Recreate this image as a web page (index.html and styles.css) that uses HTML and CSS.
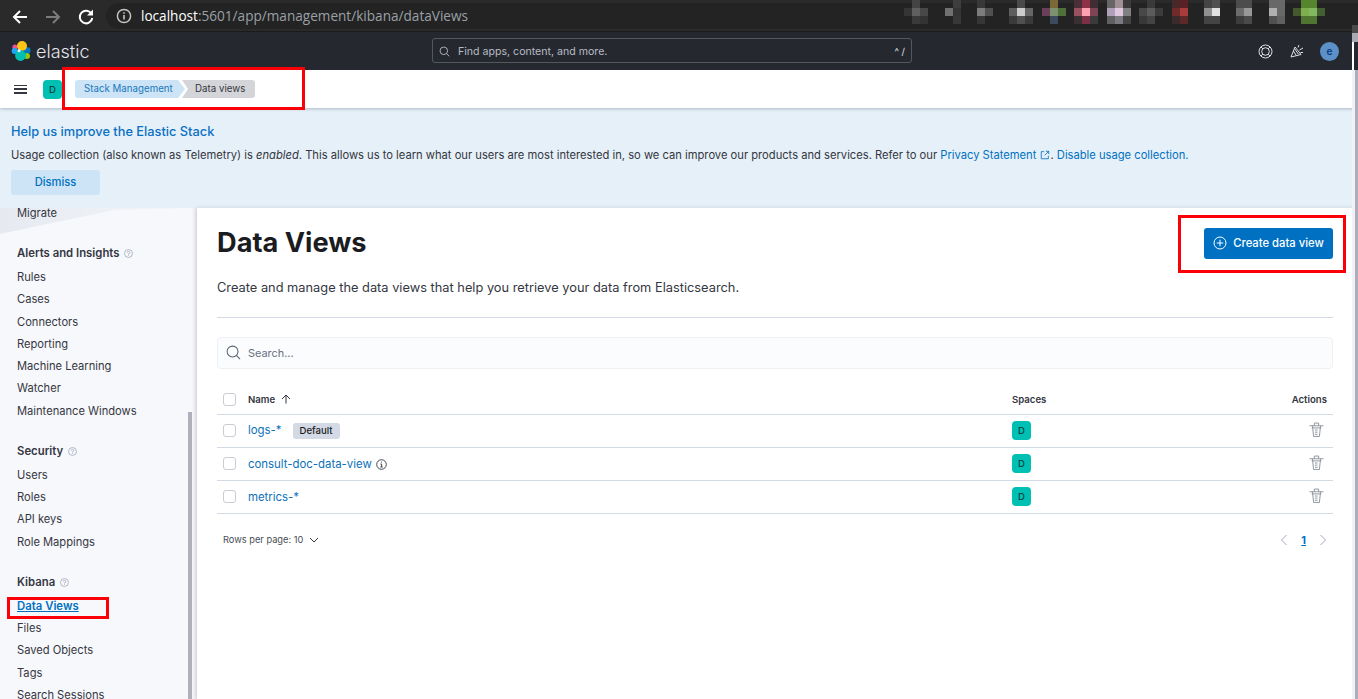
FILE: index.html
```html
<!DOCTYPE html>
<html lang="en">
<head>
    <meta charset="UTF-8">
    <meta name="viewport" content="width=device-width, initial-scale=1.0">
    <title>Data Views - Elastic</title>
    <link rel="stylesheet" href="styles.css">
</head>
<body>
    <div class="browser-bar">
        <svg class="browser-icon" width="18" height="18" viewBox="0 0 18 18"><path d="M16 9H3M9 3 3 9l6 6" fill="none" stroke="#fff" stroke-width="2"/></svg>
        <svg class="browser-icon" width="18" height="18" viewBox="0 0 18 18"><path d="M2 9h13M9 3l6 6-6 6" fill="none" stroke="#7c7c7c" stroke-width="2"/></svg>
        <svg class="browser-icon" width="18" height="18" viewBox="0 0 18 18"><path d="M14.600 6A6.300 6.300 0 1 0 15.300 10" fill="none" stroke="#fff" stroke-width="2"/><path d="M16 1.500V7.500H10Z" fill="#fff"/></svg>
        <div class="address">
            <svg width="16" height="16" viewBox="0 0 16 16"><circle cx="8" cy="8" r="6.600" fill="none" stroke="#c4c4c4" stroke-width="1.500"/><path d="M8 7v4.500M8 4.200v1.600" stroke="#c4c4c4" stroke-width="1.600"/></svg>
            <span class="address-text"><b>localhost</b>:5601/app/management/kibana/dataViews</span>
        </div>
        <svg class="mosaic" width="448" height="25" viewBox="0 0 448 25">
            <g fill="#353535"><rect x="0" y="8" width="8" height="8"/><rect x="49" y="8" width="8" height="8"/></g>
            <rect x="8" y="0" width="8" height="8" fill="#444"/><rect x="8" y="8" width="8" height="8" fill="#606060"/><rect x="8" y="16" width="8" height="8" fill="#3a3a3a"/>
            <rect x="16" y="8" width="8" height="8" fill="#484848"/><rect x="16" y="16" width="8" height="8" fill="#333"/>
            <rect x="41" y="8" width="8" height="8" fill="#707070"/>
            <rect x="49" y="0" width="8" height="8" fill="#3e3e3e"/><rect x="49" y="16" width="8" height="8" fill="#383838"/>
            <rect x="73" y="0" width="8" height="8" fill="#383838"/><rect x="73" y="8" width="8" height="8" fill="#7c7c7c"/><rect x="73" y="16" width="8" height="8" fill="#363636"/>
            <rect x="81" y="8" width="8" height="8" fill="#505050"/>
            <rect x="105" y="8" width="8" height="8" fill="#5e5e5e"/><rect x="105" y="16" width="8" height="8" fill="#3a3a3a"/>
            <rect x="113" y="0" width="8" height="8" fill="#4a4a4a"/><rect x="113" y="8" width="8" height="8" fill="#ccc"/><rect x="113" y="16" width="8" height="8" fill="#505050"/>
            <rect x="121" y="8" width="8" height="8" fill="#666"/><rect x="121" y="16" width="8" height="8" fill="#3a3a3a"/>
            <rect x="138" y="8" width="8" height="8" fill="#6a3f5a"/>
            <rect x="146" y="0" width="8" height="8" fill="#7a6838"/><rect x="146" y="8" width="8" height="8" fill="#7d9070"/><rect x="146" y="16" width="8" height="8" fill="#3c4a5e"/>
            <rect x="154" y="8" width="8" height="8" fill="#4f7038"/>
            <rect x="170" y="0" width="8" height="8" fill="#4a2e38"/><rect x="170" y="8" width="8" height="8" fill="#99505f"/><rect x="170" y="16" width="8" height="8" fill="#3a3033"/>
            <rect x="178" y="0" width="8" height="8" fill="#8d3048"/><rect x="178" y="8" width="8" height="8" fill="#ffa0b0"/><rect x="178" y="16" width="8" height="8" fill="#7d3045"/>
            <rect x="186" y="0" width="8" height="8" fill="#402c33"/><rect x="186" y="8" width="8" height="8" fill="#7c4455"/><rect x="186" y="16" width="8" height="8" fill="#3a3a3a"/>
            <rect x="203" y="0" width="8" height="8" fill="#666"/><rect x="203" y="8" width="8" height="8" fill="#b0a0b8"/><rect x="203" y="16" width="8" height="8" fill="#606060"/>
            <rect x="211" y="0" width="8" height="8" fill="#a09098"/><rect x="211" y="8" width="8" height="8" fill="#e0c8e0"/><rect x="211" y="16" width="8" height="8" fill="#7a7a80"/>
            <rect x="219" y="0" width="8" height="8" fill="#3a3a3a"/><rect x="219" y="8" width="8" height="8" fill="#808080"/><rect x="219" y="16" width="8" height="8" fill="#444"/>
            <rect x="235" y="8" width="8" height="8" fill="#484848"/><rect x="235" y="16" width="8" height="8" fill="#383838"/>
            <rect x="243" y="0" width="8" height="8" fill="#3a3a3a"/><rect x="243" y="8" width="8" height="8" fill="#5c5c5c"/><rect x="243" y="16" width="8" height="8" fill="#444"/>
            <rect x="251" y="8" width="8" height="8" fill="#3c3c3c"/>
            <rect x="268" y="0" width="8" height="8" fill="#482828"/><rect x="268" y="8" width="8" height="8" fill="#702a2a"/><rect x="268" y="16" width="8" height="8" fill="#3a2a2a"/>
            <rect x="276" y="0" width="8" height="8" fill="#5a2025"/><rect x="276" y="8" width="8" height="8" fill="#a83c3c"/><rect x="276" y="16" width="8" height="8" fill="#5c2828"/>
            <rect x="300" y="0" width="8" height="8" fill="#444"/><rect x="300" y="8" width="8" height="8" fill="#909090"/><rect x="300" y="16" width="8" height="8" fill="#444"/>
            <rect x="308" y="0" width="8" height="8" fill="#505050"/><rect x="308" y="8" width="8" height="8" fill="#e0e0e0"/><rect x="308" y="16" width="8" height="8" fill="#444"/>
            <rect x="332" y="0" width="8" height="8" fill="#4c4c4c"/><rect x="332" y="8" width="8" height="8" fill="#6c6c6c"/><rect x="332" y="16" width="8" height="8" fill="#3c3c3c"/>
            <rect x="340" y="0" width="8" height="8" fill="#4c4c4c"/><rect x="340" y="8" width="8" height="8" fill="#989898"/><rect x="340" y="16" width="8" height="8" fill="#4a4a4a"/>
            <rect x="365" y="0" width="8" height="8" fill="#686868"/><rect x="365" y="8" width="8" height="8" fill="#b0b0b0"/><rect x="365" y="16" width="8" height="8" fill="#505050"/>
            <rect x="373" y="0" width="8" height="16" fill="#686868"/><rect x="373" y="16" width="8" height="8" fill="#606060"/>
            <rect x="389" y="8" width="8" height="8" fill="#445a2e"/>
            <rect x="397" y="0" width="16" height="8" fill="#55852f"/><rect x="397" y="8" width="8" height="8" fill="#7eb050"/><rect x="405" y="8" width="8" height="8" fill="#84b860"/><rect x="397" y="16" width="16" height="8" fill="#4f7530"/>
            <rect x="413" y="8" width="8" height="8" fill="#446030"/>
        </svg>
    </div>

    <header class="top-header">
        <div class="logo">
            <svg width="20" height="20" viewBox="0 0 20 20">
                <circle cx="4" cy="6" r="2.600" fill="#f04e98"/>
                <circle cx="3.600" cy="10" r="3" fill="#1ba9f5"/>
                <circle cx="16.300" cy="9.400" r="3.200" fill="#0077cc"/>
                <circle cx="16" cy="15" r="3" fill="#93c90e"/>
                <circle cx="11" cy="5" r="5" fill="#fec514"/>
                <circle cx="9.500" cy="14.500" r="5.400" fill="#00bfb3"/>
                <circle cx="8" cy="9.700" r="1.600" fill="#e8f4f8"/>
            </svg>
            <span>elastic</span>
        </div>
        <div class="global-search">
            <svg width="11" height="11" viewBox="0 0 16 16"><circle cx="7" cy="7" r="5.500" fill="none" stroke="#b8bcc4" stroke-width="1.300"/><path d="m11 11 4 4" stroke="#b8bcc4" stroke-width="1.300"/></svg>
            <span class="global-search-text">Find apps, content, and more.</span>
            <span class="global-search-key">^ /</span>
        </div>
        <div class="header-icons">
            <svg class="help-ring" width="15" height="15" viewBox="0 0 15 15" fill="none" stroke="#dfe1e6" stroke-width="1"><circle cx="7.500" cy="7.500" r="6.500"/><circle cx="7.500" cy="7.500" r="3.800"/><path d="m2.900 2.900 2 2M12.100 2.900l-2 2M2.900 12.100l2-2M12.100 12.100l-2-2"/></svg>
            <svg class="cheer" width="14" height="14" viewBox="0 0 14 14" fill="none" stroke="#dfe1e6" stroke-width="1"><path d="M1 13 5 3l6 7.500ZM3.400 7l3 4.600M4.600 4.800l4 5.600M8 3.500 9 1M9.500 6 13 4M10.500 8.500h2.500"/></svg>
            <span class="avatar">e</span>
        </div>
    </header>

    <nav class="nav-bar">
        <button class="menu-btn" aria-label="Menu"><span></span><span></span><span></span></button>
        <span class="space-badge">D</span>
        <div class="breadcrumbs">
            <a class="crumb crumb-first">Stack Management</a>
            <span class="crumb crumb-last">Data views</span>
        </div>
    </nav>

    <section class="banner">
        <h3>Help us improve the Elastic Stack</h3>
        <p>Usage collection (also known as Telemetry) is <em>enabled</em>. This allows us to learn what our users are most interested in, so we can improve our products and services. Refer to our <a>Privacy Statement <svg width="10" height="10" viewBox="0 0 12 12" fill="none" stroke="#0071c2"><path d="M5 2H1.500v8.500H10V7M7 1.500h3.500V5M10.500 1.500 5.500 6.500"/></svg></a>. <a>Disable usage collection.</a></p>
        <button class="dismiss">Dismiss</button>
    </section>

    <div class="content">
        <aside class="sidebar">
            <div class="sidebar-wedge"></div>
            <ul class="side-group side-group-first">
                <li>Migrate</li>
            </ul>
            <div class="side-title">Alerts and Insights <svg class="help" width="9" height="9" viewBox="0 0 10 10"><circle cx="5" cy="5" r="4.400" fill="none" stroke="#98a2b3" stroke-width=".8"/><path d="M3.600 4A1.400 1.400 0 1 1 5 5.400V6.200M5 7v.8" fill="none" stroke="#98a2b3" stroke-width=".8"/></svg></div>
            <ul class="side-group">
                <li>Rules</li>
                <li>Cases</li>
                <li>Connectors</li>
                <li>Reporting</li>
                <li>Machine Learning</li>
                <li>Watcher</li>
                <li>Maintenance Windows</li>
            </ul>
            <div class="side-title">Security <svg class="help" width="9" height="9" viewBox="0 0 10 10"><circle cx="5" cy="5" r="4.400" fill="none" stroke="#98a2b3" stroke-width=".8"/><path d="M3.600 4A1.400 1.400 0 1 1 5 5.400V6.200M5 7v.8" fill="none" stroke="#98a2b3" stroke-width=".8"/></svg></div>
            <ul class="side-group">
                <li>Users</li>
                <li>Roles</li>
                <li>API keys</li>
                <li>Role Mappings</li>
            </ul>
            <div class="side-title">Kibana <svg class="help" width="9" height="9" viewBox="0 0 10 10"><circle cx="5" cy="5" r="4.400" fill="none" stroke="#98a2b3" stroke-width=".8"/><path d="M3.600 4A1.400 1.400 0 1 1 5 5.400V6.200M5 7v.8" fill="none" stroke="#98a2b3" stroke-width=".8"/></svg></div>
            <ul class="side-group">
                <li class="active">Data Views</li>
                <li>Files</li>
                <li>Saved Objects</li>
                <li>Tags</li>
                <li>Search Sessions</li>
            </ul>
            <div class="side-thumb"></div>
        </aside>

        <main class="main">
            <div class="page-head">
                <h1>Data Views</h1>
                <button class="create-btn">
                    <svg width="14" height="14" viewBox="0 0 14 14" fill="none" stroke="#fff"><circle cx="7" cy="7" r="6"/><path d="M7 3.800v6.400M3.800 7h6.400"/></svg>
                    Create data view
                </button>
            </div>
            <p class="page-desc">Create and manage the data views that help you retrieve your data from Elasticsearch.</p>
            <hr class="divider">
            <div class="search-box">
                <svg width="15" height="15" viewBox="0 0 16 16"><circle cx="7" cy="7" r="5.800" fill="none" stroke="#5a6270" stroke-width="1.100"/><path d="m11 11 4 4" stroke="#5a6270" stroke-width="1.100"/></svg>
                <span>Search...</span>
            </div>

            <table class="views-table">
                <thead>
                    <tr>
                        <th class="col-check"><span class="checkbox"></span></th>
                        <th class="col-name">Name <svg class="sort-icon" width="10" height="10" viewBox="0 0 10 10"><path d="M5 9.500V1M1 5l4-4 4 4" fill="none" stroke="#343741"/></svg></th>
                        <th class="col-spaces">Spaces</th>
                        <th class="col-actions">Actions</th>
                    </tr>
                </thead>
                <tbody>
                    <tr>
                        <td class="col-check"><span class="checkbox"></span></td>
                        <td class="col-name"><a>logs-*</a><span class="default-tag">Default</span></td>
                        <td class="col-spaces"><span class="space-badge">D</span></td>
                        <td class="col-actions"><svg width="15" height="15" viewBox="0 0 14 14" fill="none" stroke="#8f949c" stroke-width=".9"><path d="M.5 3.500h13M5 3.500V1h4v2.500M2.500 5.500h9M3.200 3.500 4.300 13.500h5.400l1.100-10M5.500 7.500H8M5.500 9.500H8M5.500 11.500H8"/></svg></td>
                    </tr>
                    <tr>
                        <td class="col-check"><span class="checkbox"></span></td>
                        <td class="col-name"><a>consult-doc-data-view</a><svg class="info-icon" width="11" height="11" viewBox="0 0 11 11" fill="none" stroke="#343741" stroke-width=".9"><circle cx="5.500" cy="5.500" r="4.800"/><path d="M4.300 5h1.300v3M4.300 8h2.500M5.500 2.600v1"/></svg></td>
                        <td class="col-spaces"><span class="space-badge">D</span></td>
                        <td class="col-actions"><svg width="15" height="15" viewBox="0 0 14 14" fill="none" stroke="#8f949c" stroke-width=".9"><path d="M.5 3.500h13M5 3.500V1h4v2.500M2.500 5.500h9M3.200 3.500 4.300 13.500h5.400l1.100-10M5.500 7.500H8M5.500 9.500H8M5.500 11.500H8"/></svg></td>
                    </tr>
                    <tr>
                        <td class="col-check"><span class="checkbox"></span></td>
                        <td class="col-name"><a>metrics-*</a></td>
                        <td class="col-spaces"><span class="space-badge">D</span></td>
                        <td class="col-actions"><svg width="15" height="15" viewBox="0 0 14 14" fill="none" stroke="#8f949c" stroke-width=".9"><path d="M.5 3.500h13M5 3.500V1h4v2.500M2.500 5.500h9M3.200 3.500 4.300 13.500h5.400l1.100-10M5.500 7.500H8M5.500 9.500H8M5.500 11.500H8"/></svg></td>
                    </tr>
                </tbody>
            </table>

            <div class="table-foot">
                <span class="rows-per-page">Rows per page: 10 <svg width="10" height="10" viewBox="0 0 10 10"><path d="M1 3l4 4 4-4" fill="none" stroke="#343741"/></svg></span>
                <div class="pager">
                    <svg width="8" height="12" viewBox="0 0 8 12"><path d="M6.500 1 1.500 6l5 5" fill="none" stroke="#a2abba"/></svg>
                    <span class="pager-num">1</span>
                    <svg width="8" height="12" viewBox="0 0 8 12"><path d="M1.500 1l5 5-5 5" fill="none" stroke="#a2abba"/></svg>
                </div>
            </div>
        </main>
    </div>

    <div class="page-scrollbar">
        <div class="scroll-arrow"></div>
        <div class="scroll-cap"></div>
        <div class="scroll-gap"></div>
        <div class="scroll-thumb"></div>
    </div>

    <div class="red-box red-crumbs"></div>
    <div class="red-box red-create"></div>
    <div class="red-box red-side"></div>
</body>
</html>
```

FILE: styles.css
```css
* {
    box-sizing: border-box;
}
html, body {
    height: 699px;
    overflow: hidden;
}
body {
    margin: 0;
    font-family: Inter, "Noto Sans", sans-serif;
    font-size: 11.150px;
    color: #343741;
    background: #fff;
    display: flex;
    flex-direction: column;
    position: relative;
}
ul {
    list-style: none;
    margin: 0;
    padding: 0;
}
a {
    color: #0071c2;
}

/* browser chrome */
.browser-bar {
    height: 32px;
    flex: none;
    display: flex;
    align-items: flex-start;
    padding: 4px 0 0 11px;
    gap: 15px;
    background: #2a2a2a;
    border-bottom: 1px solid #1b1b1b;
    position: relative;
}
.browser-icon {
    margin-top: 4px;
}
.address {
    flex: 1;
    height: 26px;
    margin-left: -4px;
    margin-top: -1px;
    padding-left: 10px;
    display: flex;
    align-items: center;
    gap: 9px;
    background: #232323;
    border-radius: 13px 0 0 13px;
}
.address-text {
    font-family: "Open Sans", sans-serif;
    font-size: 13.600px;
    color: #9aa0a6;
    position: relative;
    top: -1px;
}
.address-text b {
    color: #fff;
    font-weight: 400;
}
.mosaic {
    position: absolute;
    left: 904px;
    top: 0;
}

/* elastic header */
.top-header {
    height: 38px;
    flex: none;
    background: #25282f;
    display: flex;
    align-items: center;
    padding: 0 19px 0 11px;
    position: relative;
}
.logo {
    display: flex;
    align-items: center;
    gap: 5px;
    color: #e4e6ea;
    font-size: 18px;
    font-weight: 300;
}
.global-search {
    position: absolute;
    left: 432px;
    top: 6px;
    width: 480px;
    height: 25px;
    border: 1px solid #53575f;
    border-radius: 3px;
    display: flex;
    align-items: center;
    padding: 1px 6px 0 6px;
    gap: 8px;
    font-size: 10.600px;
    color: #b8bcc4;
}
.global-search-text {
    flex: 1;
}
.global-search-key {
    font-size: 9.500px;
    color: #dfe1e6;
}
.header-icons {
    margin-left: auto;
    display: flex;
    align-items: center;
}
.help-ring {
    margin-right: 18px;
    position: relative;
    left: 1px;
}
.cheer {
    margin-right: 16px;
}
.avatar {
    width: 19px;
    height: 19px;
    border-radius: 50%;
    background: #5b90c8;
    color: #0b3a78;
    font-size: 10px;
    font-weight: 600;
    display: flex;
    align-items: center;
    justify-content: center;
}

/* nav bar */
.nav-bar {
    height: 38px;
    flex: none;
    background: #fff;
    display: flex;
    align-items: center;
    padding-left: 14px;
    box-shadow: 0 1px 3px rgba(60, 80, 110, .35);
    position: relative;
    z-index: 2;
}
.menu-btn {
    width: 13px;
    height: 9px;
    padding: 0;
    border: 0;
    background: none;
    display: flex;
    flex-direction: column;
    justify-content: space-between;
    margin-right: 16px;
}
.menu-btn span {
    height: 1.500px;
    background: #343741;
}
.space-badge {
    width: 19px;
    height: 19px;
    border-radius: 4px;
    background: #00bfb3;
    color: #062b2a;
    font-size: 9.500px;
    display: inline-flex;
    align-items: center;
    justify-content: center;
}
.breadcrumbs {
    display: flex;
    margin-left: 13px;
    font-size: 9.700px;
    letter-spacing: .02px;
}
.crumb {
    height: 18px;
    display: flex;
    align-items: center;
    padding-bottom: 1px;
}
.crumb-first {
    background: #cce4f5;
    color: #1a78bd;
    padding-left: 9px;
    border-radius: 3px 0 0 3px;
    clip-path: polygon(0 0, calc(100% - 7px) 0, 100% 50%, calc(100% - 7px) 100%, 0 100%);
    width: 110px;
}
.crumb-last {
    background: #d4d5d8;
    color: #343741;
    margin-left: -3px;
    width: 73px;
    padding-left: 13px;
    border-radius: 0 3px 3px 0;
    clip-path: polygon(0 0, 100% 0, 100% 100%, 0 100%, 6px 50%);
}

/* telemetry banner */
.banner {
    height: 100px;
    flex: none;
    background: #e6f0f8;
    padding: 15px 11px 0;
}
.banner h3 {
    margin: 0;
    color: #0b71c4;
    font-size: 12.800px;
    font-weight: 500;
    line-height: 17px;
}
.banner p {
    margin: 7px 0 0;
    line-height: 16px;
    font-size: 11.180px;
}
.banner p svg {
    vertical-align: -1px;
    margin-left: 1px;
}
.dismiss {
    display: block;
    width: 89px;
    height: 25px;
    margin-top: 7px;
    padding: 0 0 2px;
    border: 0;
    border-radius: 3px;
    background: #cce4f5;
    color: #0071c2;
    font: 500 11.150px Inter, sans-serif;
}

/* content */
.content {
    flex: 1;
    display: flex;
    min-height: 0;
}
.sidebar {
    width: 197px;
    flex: none;
    background: #f7f8fc;
    overflow: hidden;
    padding-left: 17px;
    position: relative;
    box-shadow: inset -5px 0 5px -4px rgba(120, 130, 150, .18);
}
.sidebar-wedge {
    position: absolute;
    left: 0;
    top: 0;
    width: 190px;
    height: 26px;
    background: linear-gradient(to right, #e6eaf0, #f3f5f9);
    clip-path: polygon(0 0, 100% 0, 60% 8%, 0 100%);
}
.side-group {
    position: relative;
}
.side-group li {
    height: 22.300px;
    line-height: 22.300px;
    white-space: nowrap;
}
.side-group-first li {
    height: 16.300px;
    line-height: 10.300px;
}
.side-group li.active {
    color: #0071c2;
    font-size: 11.350px;
    font-weight: 600;
    text-decoration: underline;
}
.side-title {
    position: relative;
    margin-top: 17.700px;
    height: 24px;
    line-height: 22px;
    font-size: 11.350px;
    font-weight: 600;
}
.help {
    margin-left: 2px;
    vertical-align: -1px;
}
.side-thumb {
    position: absolute;
    left: 188px;
    top: 204px;
    bottom: 0;
    width: 4px;
    background: #aeb0bb;
}
.main {
    flex: 1;
    min-width: 0;
    background: #fff;
    padding: 20px 25px 0 20px;
    box-shadow: -1px 0 4px rgba(90, 100, 120, .2);
    position: relative;
}
.page-scrollbar {
    position: absolute;
    left: 1352px;
    top: 25px;
    bottom: 0;
    width: 6px;
    display: flex;
    flex-direction: column;
    z-index: 4;
}
.scroll-arrow {
    height: 8px;
    background: #4a4a4a;
}
.scroll-cap {
    height: 9px;
    background: #aaaab5;
}
.scroll-gap {
    height: 28px;
    background: #25282f;
    border-left: 2px solid #fff;
}
.scroll-thumb {
    flex: 1;
    background: #aeaebb;
    border-left: 3px solid #f1f2f5;
}
.page-head {
    display: flex;
    justify-content: space-between;
    align-items: center;
    height: 31px;
}
h1 {
    margin: 0 0 2px;
    color: #1a1c21;
    font-size: 27.200px;
    font-weight: 700;
    line-height: 31px;
}
.create-btn {
    width: 129px;
    height: 31px;
    padding: 0 0 1px;
    border: 0;
    border-radius: 3px;
    background: #0071c2;
    color: #fff;
    font: 500 11.250px Inter, sans-serif;
    display: flex;
    align-items: center;
    justify-content: center;
    gap: 6px;
}
.page-desc {
    margin: 20px 0 0;
    font-size: 12.820px;
    line-height: 18px;
}
.divider {
    margin: 20px 0 0;
    border: 0;
    border-top: 1px solid #d3dae6;
}
.search-box {
    margin-top: 19px;
    height: 32px;
    background: #fbfcfd;
    border: 1px solid #eef0f4;
    border-radius: 4px;
    display: flex;
    align-items: center;
    gap: 7px;
    padding-left: 8px;
    padding-bottom: 1px;
    color: #69707d;
    font-size: 10.900px;
}
.views-table {
    width: 100%;
    margin-top: 13px;
    border-collapse: collapse;
    table-layout: fixed;
}
.views-table th, .views-table td {
    padding: 0;
    border-bottom: 1px solid #d3dae6;
    text-align: left;
    height: 33px;
    vertical-align: middle;
}
.views-table th {
    font-size: 9.600px;
    font-weight: 600;
    height: 32px;
    padding-top: 3px;
}
.col-check {
    width: 31px;
    padding-left: 6px !important;
}
.col-spaces {
    width: 260px;
}
.col-actions {
    width: 61px;
    text-align: right !important;
    padding-right: 6px !important;
}
.col-actions svg {
    margin-right: 3px;
}
.checkbox {
    display: block;
    width: 13px;
    height: 13px;
    background: #fff;
    border: 1px solid #c9ccd3;
    border-radius: 3px;
}
.sort-icon {
    margin-left: 3px;
    vertical-align: -1.500px;
}
.views-table a {
    font-size: 11.400px;
    color: #0b71b8;
}
.default-tag {
    display: inline-block;
    margin-left: 11px;
    padding: 0 7px;
    height: 16px;
    line-height: 16px;
    background: #d3dae6;
    border-radius: 3px;
    color: #1a1c21;
    font-size: 9.600px;
    font-weight: 500;
}
.info-icon {
    margin-left: 4px;
    vertical-align: -2px;
}
.table-foot {
    display: flex;
    justify-content: space-between;
    align-items: center;
    margin-top: 17px;
    height: 18px;
    padding: 0 6px;
}
.rows-per-page {
    font-size: 9.250px;
    color: #494d55;
    display: flex;
    align-items: center;
    gap: 6px;
}
.pager {
    display: flex;
    align-items: center;
    gap: 13px;
}
.pager-num {
    color: #0071c2;
    font-size: 11px;
    font-weight: 700;
    text-decoration: underline;
}

/* annotations drawn on the screenshot */
.red-box {
    position: absolute;
    border: 3px solid #fb0007;
    z-index: 5;
}
.red-crumbs {
    left: 62px;
    top: 67px;
    width: 243px;
    height: 43px;
}
.red-create {
    left: 1178px;
    top: 215px;
    width: 168px;
    height: 58px;
}
.red-side {
    left: 7px;
    top: 597px;
    width: 102px;
    height: 22px;
}
```
